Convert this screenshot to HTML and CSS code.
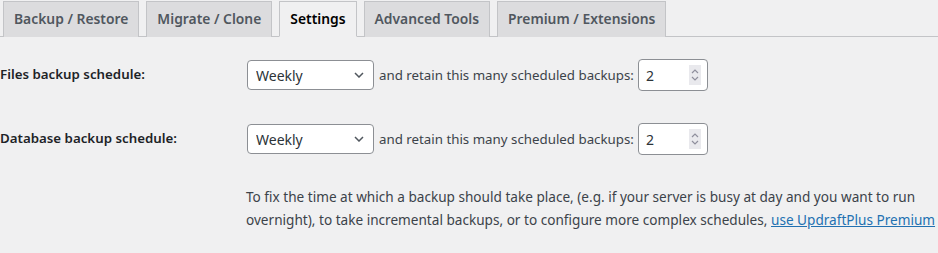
FILE: index.html
```html
<!doctype html>
<html lang="en">
<head>
  <meta charset="utf-8">
  <title>UpdraftPlus · Settings</title>
  <link rel="stylesheet" href="styles.css">
</head>
<body>
<nav class="tabs">
  <a class="tab" href="#">Backup / Restore</a>
  <a class="tab" href="#">Migrate / Clone</a>
  <a class="tab active" href="#">Settings</a>
  <a class="tab" href="#">Advanced Tools</a>
  <a class="tab" href="#">Premium / Extensions</a>
</nav>

<section class="settings">
  <div class="row">
    <label class="label" for="files-interval">Files backup schedule:</label>
    <div class="controls">
      <div class="select-wrap">
        <select id="files-interval" class="select">
          <option>Manual</option>
          <option selected>Weekly</option>
        </select>
        <svg class="chevron" width="10" height="6" viewBox="0 0 10 6"><path d="M1 1l4 4 4-4" fill="none" stroke="#50575e" stroke-width="1.5"/></svg>
      </div>
      <span class="retain">and retain this many scheduled backups:</span>
      <div class="number">
        <input class="num-input" type="text" value="2">
        <span class="spinner">
          <svg width="10" height="16" viewBox="0 0 10 16"><path d="M2 6l3-3 3 3M2 10l3 3 3-3" fill="none" stroke="#8f8f9d" stroke-width="1.2"/></svg>
        </span>
      </div>
    </div>
  </div>

  <div class="row">
    <label class="label" for="db-interval">Database backup schedule:</label>
    <div class="controls">
      <div class="select-wrap">
        <select id="db-interval" class="select">
          <option>Manual</option>
          <option selected>Weekly</option>
        </select>
        <svg class="chevron" width="10" height="6" viewBox="0 0 10 6"><path d="M1 1l4 4 4-4" fill="none" stroke="#50575e" stroke-width="1.5"/></svg>
      </div>
      <span class="retain">and retain this many scheduled backups:</span>
      <div class="number">
        <input class="num-input" type="text" value="2">
        <span class="spinner">
          <svg width="10" height="16" viewBox="0 0 10 16"><path d="M2 6l3-3 3 3M2 10l3 3 3-3" fill="none" stroke="#8f8f9d" stroke-width="1.2"/></svg>
        </span>
      </div>
    </div>
  </div>

  <p class="note">
    To fix the time at which a backup should take place, (e.g. if your server is busy at day and you want to run<br>
    overnight), to take incremental backups, or to configure more complex schedules, <a href="#">use UpdraftPlus Premium</a>
  </p>
</section>
</body>
</html>
```

FILE: styles.css
```css
* {
  box-sizing: border-box;
}
body {
  margin: 0;
  background: #f0f0f1;
  color: #3c434a;
  font-family: 'Noto Sans', sans-serif;
  font-size: 14px;
}
.tabs {
  display: flex;
  gap: 7px;
  padding: 1px 0 0 3px;
  border-bottom: 1px solid #c3c4c7;
}
.tab {
  margin-bottom: -1px;
  padding: 5px 10px;
  line-height: 24px;
  background: #dcdcde;
  border: 1px solid #c3c4c7;
  border-bottom: none;
  color: #50575e;
  font-size: 13.85px;
  font-weight: 600;
  text-decoration: none;
}
.tab.active {
  background: #f0f0f1;
  color: #000;
  border-bottom: 1px solid #f0f0f1;
}
.settings {
  padding-top: 6px;
}
.row {
  display: flex;
  align-items: center;
  padding: 16px 0;
}
.label {
  width: 247px;
  margin-top: -2px;
  color: #1d2327;
  font-size: 13.3px;
  font-weight: 600;
}
.controls {
  display: flex;
  align-items: center;
  gap: 5px;
}
.select-wrap {
  position: relative;
}
.select {
  appearance: none;
  width: 127px;
  height: 30px;
  padding: 0 24px 0 8px;
  background: #fff;
  border: 1px solid #8c8f94;
  border-radius: 4px;
  color: #2c3338;
  font: inherit;
}
.chevron {
  position: absolute;
  right: 10px;
  top: 12px;
}
.retain {
  margin-right: -1px;
  font-size: 13.3px;
}
.number {
  display: flex;
  align-items: center;
  width: 70px;
  height: 32px;
  padding: 0 6px 0 7px;
  background: #fff;
  border: 1px solid #8c8f94;
  border-radius: 4px;
}
.num-input {
  width: 100%;
  border: none;
  padding: 0;
  color: #2c3338;
  font: inherit;
  outline: none;
}
.spinner {
  display: flex;
  align-items: center;
  justify-content: center;
  width: 16px;
  height: 20px;
  background: #e9e9ed;
}
.note {
  margin: 14px 0 0 246px;
  line-height: 23px;
  font-size: 13.6px;
  color: #3c434a;
}
.note a {
  color: #2271b1;
}
```
